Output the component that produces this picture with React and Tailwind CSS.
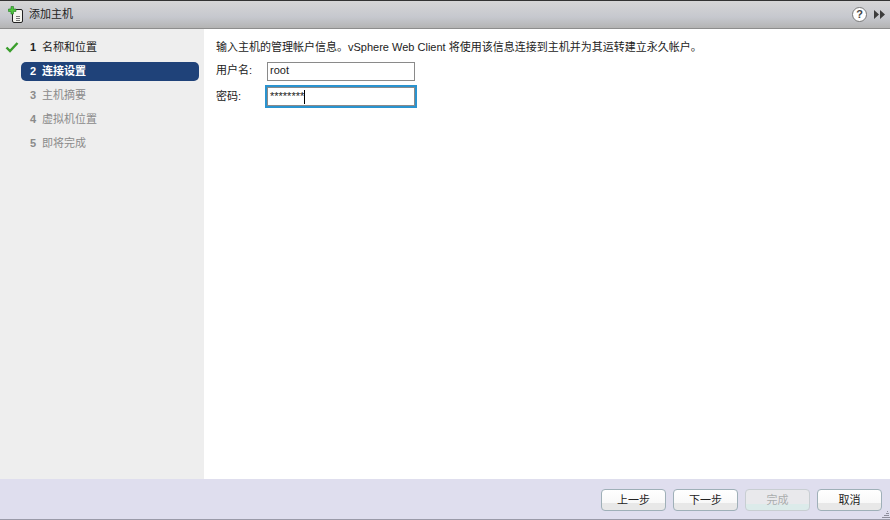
import React from 'react';

const cjk = "font-['Liberation_Sans','Noto_Sans_CJK_SC',sans-serif]";

const HostIcon = () => (
  <svg width="16" height="17" viewBox="0 0 16 17" className="ml-[8px] mr-[5px] shrink-0">
    <rect x="4.5" y="3.5" width="10" height="13" rx="1.5" fill="#f4f4ee" stroke="#222" />
    <rect x="8" y="10" width="4" height="1" fill="#777" />
    <rect x="8" y="12" width="4" height="1" fill="#777" />
    <rect x="8" y="14" width="4" height="1" fill="#777" />
    <path d="M3 0.5h2.5v2.5H8v2.5H5.500V8H3V5.500H0.500V3H3z" fill="#4fc43c" stroke="#1c7a20" strokeWidth="0.6" />
  </svg>
);

const Check = () => (
  <svg width="14" height="12" viewBox="0 0 14 12" className="absolute left-[5px] top-[12px]">
    <path d="M1.500 6.500 5 10 12.500 2" fill="none" stroke="#3a9e2c" strokeWidth="2.400" />
  </svg>
);

const Grip = () => (
  <svg width="9" height="9" viewBox="0 0 9 9" className="absolute bottom-0 right-0">
    <path d="M6 1h1v1H6zM5 3h3v1H5zM3 5h5v1H3zM1 7h8v1H1z" fill="#8f8f9c" />
  </svg>
);

const steps = [
  { n: 1, label: '名称和位置', state: 'done' },
  { n: 2, label: '连接设置', state: 'active' },
  { n: 3, label: '主机摘要', state: 'todo' },
  { n: 4, label: '虚拟机位置', state: 'todo' },
  { n: 5, label: '即将完成', state: 'todo' },
];

const Step = ({ step }) => {
  if (step.state === 'active') {
    return (
      <div className="flex h-[19px] w-[178px] items-center rounded-[5px] bg-[#1f4279] pl-[9px] text-[11px] font-bold text-white">
        <span className="w-[12px]">{step.n}</span>
        <span>{step.label}</span>
      </div>
    );
  }
  const color = step.state === 'done' ? 'text-[#222222]' : 'text-[#8a8a8a]';
  return (
    <div className={`flex h-[19px] w-[178px] items-center pl-[9px] text-[11px] ${color}`}>
      <span className="w-[12px] font-bold">{step.n}</span>
      <span>{step.label}</span>
    </div>
  );
};

const Btn = ({ children, disabled }) => (
  <div
    className={`flex h-[22px] w-[65px] items-center justify-center rounded-[4px] border text-[11px] ${
      disabled
        ? 'border-[#c8ced2] bg-[linear-gradient(#e9e9ec_0,#e9e9ec_70%,#dcebea_70%)] text-[#a9adae]'
        : 'border-[#9fb0b8] bg-[linear-gradient(#ffffff_0,#f8f8f8_65%,#e8e8e8_65%)] text-[#222222]'
    }`}
  >
    {children}
  </div>
);

export default function App() {
  return (
    <div className={`flex h-[520px] w-[890px] flex-col overflow-hidden bg-white ${cjk}`}>
      <div className="flex h-[29px] shrink-0 items-center border-b border-[#8d8d8d] border-t border-t-[#333333] bg-[linear-gradient(#d6d6d6,#c6c8ce_60%,#b4b4b4)]">
        <HostIcon />
        <span className="text-[11px] text-[#222222]">添加主机</span>
        <div className="ml-auto flex items-center gap-[6px] pr-[5px]">
          <div className="flex h-[15px] w-[15px] items-center justify-center rounded-full border border-[#777777] bg-white text-[11px] font-bold text-[#444444]">?</div>
          <svg width="12" height="9" viewBox="0 0 12 9">
            <path d="M1 0l5 4.500L1 9zM7 0l5 4.500L7 9z" fill="#3c3c3c" />
          </svg>
        </div>
      </div>

      <div className="flex min-h-0 flex-1">
        <div className="relative flex w-[204px] shrink-0 flex-col gap-[5px] bg-[#eeeeee] pl-[21px] pt-[9px]">
          <Check />
          {steps.map((s) => (
            <Step key={s.n} step={s} />
          ))}
        </div>
        <div className="flex-1 pl-[12px] pt-[10px] text-[11px] text-[#222222]">
          <div className="h-[16px] leading-[16px]">输入主机的管理帐户信息。vSphere Web Client 将使用该信息连接到主机并为其运转建立永久帐户。</div>
          <div className="mt-[7px] flex h-[19px] items-center">
            <span className="w-[51px] -translate-y-px">用户名:</span>
            <div className="flex h-[19px] w-[148px] items-center border border-[#8a8a8a] bg-white pb-[2px] pl-[2px] text-[11px]">root</div>
          </div>
          <div className="mt-[6px] flex h-[19px] items-center">
            <span className="w-[51px]">密码:</span>
            <div className="flex h-[19px] w-[148px] items-center border border-[#8a8a8a] bg-white pl-[2px] text-[11px] outline-2 outline-[#2a93cf]">
              ********
              <span className="h-[14px] w-px bg-black" />
            </div>
          </div>
        </div>
      </div>

      <div className="relative flex h-[41px] shrink-0 items-start justify-end gap-[7px] border-b border-[#9a9aa8] bg-[#dfdeee] pr-[8px] pt-[10px]">
        <Btn>上一步</Btn>
        <Btn>下一步</Btn>
        <Btn disabled>完成</Btn>
        <Btn>取消</Btn>
        <Grip />
      </div>
    </div>
  );
}
